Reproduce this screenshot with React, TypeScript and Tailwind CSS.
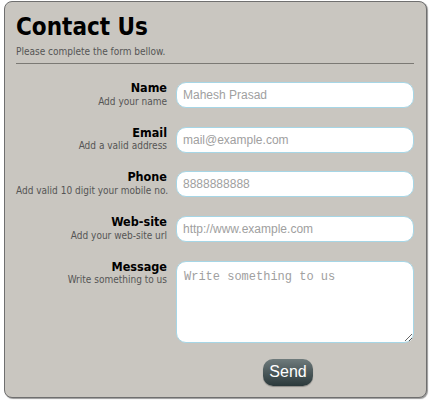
const fields = [
  { label: "Name", hint: "Add your name", placeholder: "Mahesh Prasad" },
  { label: "Email", hint: "Add a valid address", placeholder: "mail@example.com" },
  { label: "Phone", hint: "Add valid 10 digit your mobile no.", placeholder: "8888888888" },
  { label: "Web-site", hint: "Add your web-site url", placeholder: "http://www.example.com" },
];

function Label({ label, hint }: { label: string; hint: string }) {
  return (
    <div className="w-[151px] shrink-0 text-right leading-none whitespace-nowrap">
      <div className="text-[12.5px] font-bold text-black">{label}</div>
      <div className="mt-[2px] text-[10px] text-[#555]">{hint}</div>
    </div>
  );
}

export default function App() {
  return (
    <div className="w-[431px] h-[404px] bg-white pl-[4px] pt-[1px] font-['DejaVu_Sans_Condensed',Tahoma,sans-serif]">
      <div className="w-[423px] h-[397px] rounded-[8px] border border-[#6f6f6f] bg-[#c9c6c0] shadow-[1px_1px_1px_#999] px-[11px]">
        <h1 className="mt-[13px] text-[24px] font-bold leading-none text-black">Contact Us</h1>
        <p className="mt-[8px] text-[10px] text-[#555] leading-none">Please complete the form bellow.</p>
        <div className="mt-[6px] h-[1px] w-[398px] bg-[#7b7974]" />
        <div className="mt-[18px] flex flex-col gap-[18.7px]">
          {fields.map((f) => (
            <div key={f.label} className="flex gap-[9px]">
              <Label label={f.label} hint={f.hint} />
              <input
                placeholder={f.placeholder}
                className="h-[26px] w-[238px] rounded-[10px] border border-[#a6d6e6] bg-white px-[6px] text-[12px] font-['Liberation_Sans',Arial,sans-serif] placeholder:text-[#a0a0a0] outline-none"
              />
            </div>
          ))}
          <div className="flex gap-[9px]">
            <Label label="Message" hint="Write something to us" />
            <textarea
              placeholder="Write something to us"
              className="h-[82px] w-[238px] resize-y rounded-[10px] border border-[#a6d6e6] bg-white px-[7px] py-[8px] text-[12px] leading-[14px] font-['Liberation_Mono','Courier_New',monospace] placeholder:text-[#a0a0a0] outline-none"
            />
          </div>
        </div>
        <div className="mt-[16px] pl-[247px]">
          <button className="h-[27px] w-[50px] rounded-[10px] bg-gradient-to-b from-[#6f7b7c] to-[#2b393b] text-[16px] text-white font-['Liberation_Sans',Arial,sans-serif] shadow-[0_1px_1px_rgba(0,0,0,0.3)]">
            Send
          </button>
        </div>
      </div>
    </div>
  );
}
